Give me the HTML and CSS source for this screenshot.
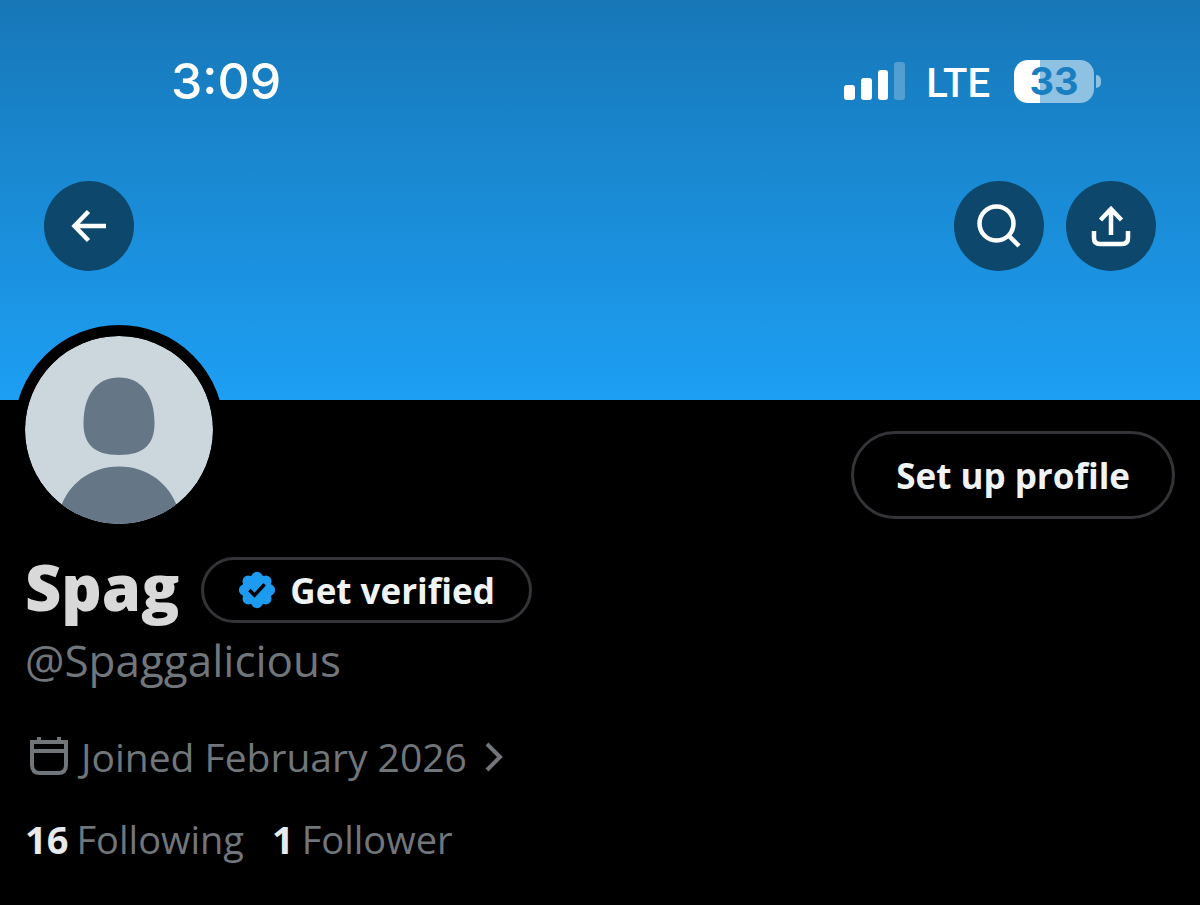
FILE: index.html
```html
<!DOCTYPE html>
<html lang="en">
<head>
  <meta charset="UTF-8">
  <meta name="viewport" content="width=device-width, initial-scale=1.0">
  <title>Spag (@Spaggalicious)</title>
  <link rel="stylesheet" href="styles.css">
</head>
<body>

<header class="banner">
  <div class="status-bar">
    <span class="time">3:09</span>
    <div class="status-icons">
      <svg class="signal" viewBox="0 0 62 40" aria-hidden="true">
        <rect x="0" y="24" width="11" height="15" rx="3"/>
        <rect x="17" y="17" width="11" height="22" rx="3"/>
        <rect x="34" y="9" width="10" height="30" rx="3"/>
        <rect x="50" y="1" width="11" height="38" rx="3" opacity=".25"/>
      </svg>
      <span class="network">LTE</span>
      <div class="battery"><span class="battery-level">33</span></div>
    </div>
  </div>

  <nav class="toolbar">
    <button class="round-btn" type="button" aria-label="Back">
      <svg viewBox="0 0 90 90"><path d="M62 45H31M44.500 30.500L30.500 45l14 14.500"/></svg>
    </button>
    <div class="toolbar-right">
      <button class="round-btn" type="button" aria-label="Search">
        <svg viewBox="0 0 90 90"><circle cx="42.500" cy="42.500" r="17"/><path d="M54.500 54.500l10.500 10.500"/></svg>
      </button>
      <button class="round-btn" type="button" aria-label="Share">
        <svg viewBox="0 0 90 90"><path d="M45 54V28M34.500 39L45 28l10.500 11M28 50v7q0 6 6 6h22q6 0 6-6v-7"/></svg>
      </button>
    </div>
  </nav>
</header>

<main class="profile">
  <div class="profile-top">
    <svg class="avatar" viewBox="0 0 188 188" role="img" aria-label="Default profile picture">
      <defs><clipPath id="face"><circle cx="94" cy="94" r="94"/></clipPath></defs>
      <g clip-path="url(#face)">
        <rect width="188" height="188" fill="#ccd6dd"/>
        <path fill="#657786" d="M94 41.500c22 0 35.500 17 35.500 46 0 20-10 31.500-35.500 31.500S58.500 107.500 58.500 87.500c0-29 13.500-46 35.500-46z"/>
        <path fill="#657786" d="M32 188c3-33 28-57.500 62-57.500s59 24.500 62 57.500z"/>
      </g>
    </svg>
    <button class="outline-btn setup" type="button">Set up profile</button>
  </div>

  <div class="name-row">
    <h1 class="name">Spag</h1>
    <button class="outline-btn verify" type="button">
      <svg class="badge" viewBox="0 0 22 22" aria-hidden="true">
        <g fill="#1d9bf0">
          <circle cx="11" cy="11" r="8"/>
          <circle cx="11" cy="4.500" r="3"/>
          <circle cx="15.600" cy="6.400" r="3"/>
          <circle cx="17.500" cy="11" r="3"/>
          <circle cx="15.600" cy="15.600" r="3"/>
          <circle cx="11" cy="17.500" r="3"/>
          <circle cx="6.400" cy="15.600" r="3"/>
          <circle cx="4.500" cy="11" r="3"/>
          <circle cx="6.400" cy="6.400" r="3"/>
        </g>
        <path fill="none" stroke="#000" stroke-width="1.800" d="M7 11l2.700 2.700 5.300-5.700"/>
      </svg>
      Get verified
    </button>
  </div>
  <p class="handle">@Spaggalicious</p>

  <a class="joined" href="#joined">
    <svg class="calendar" viewBox="0 0 40 40" aria-hidden="true"><path d="M3 5h34v23q0 8-8 8H11q-8 0-8-8zM3 14h34M10 5V0M30 5V0"/></svg>
    Joined February 2026
    <svg class="chevron" viewBox="0 0 18 30" aria-hidden="true"><path d="M2 2l13 13L2 28"/></svg>
  </a>

  <div class="counts">
    <a href="#following"><b>16</b> <span>Following</span></a>
    <a href="#followers"><b>1</b> <span>Follower</span></a>
  </div>
</main>

</body>
</html>
```
FILE: styles.css
```css
body {
  margin: 0;
  background: #000;
  color: #71767b;
  font-family: "Open Sans", "Noto Sans", sans-serif;
}
button {
  font-family: inherit;
  cursor: pointer;
}
a {
  color: inherit;
  text-decoration: none;
}
.banner {
  box-sizing: border-box;
  height: 400px;
  padding-top: 56px;
  background: linear-gradient(#1777b7, #1d9ff4);
}
.status-bar {
  display: flex;
  align-items: center;
  justify-content: space-between;
  height: 50px;
  padding: 0 100px 0 171px;
  color: #fff;
  font-family: Inter, sans-serif;
}
.time {
  font-size: 50px;
  font-weight: 500;
}
.status-icons {
  display: flex;
  align-items: center;
}
.signal {
  width: 62px;
  height: 40px;
  margin-right: 20px;
  fill: #fff;
}
.network {
  margin-right: 24px;
  padding-top: 4px;
  font-family: Roboto, sans-serif;
  font-size: 40px;
  font-weight: 500;
}
.battery {
  position: relative;
  width: 80px;
  height: 43px;
  margin-right: 6px;
  border-radius: 14px;
  background: linear-gradient(90deg, #fff 33%, #8fc1e3 33%);
  color: #1a7fc1;
  text-align: center;
}
.battery::after {
  content: "";
  position: absolute;
  top: 15px;
  right: -7px;
  width: 5px;
  height: 13px;
  border-radius: 0 6px 6px 0;
  background: #8fc1e3;
}
.battery-level {
  font-size: 38px;
  font-weight: 700;
  line-height: 43px;
}
.toolbar {
  display: flex;
  justify-content: space-between;
  padding: 75px 44px 0;
}
.toolbar-right {
  display: flex;
  gap: 22px;
}
.round-btn {
  width: 90px;
  height: 90px;
  padding: 0;
  border: 0;
  border-radius: 50%;
  background: #0d476b;
}
.round-btn svg {
  display: block;
  fill: none;
  stroke: #fff;
  stroke-width: 4.5;
}
.profile {
  padding: 0 25px 32px;
}
.profile-top {
  display: flex;
  align-items: flex-start;
  justify-content: space-between;
}
.avatar {
  width: 188px;
  height: 188px;
  margin: -75px 0 0 -11px;
  border: 11px solid #000;
  border-radius: 50%;
  background: #000;
}
.outline-btn {
  display: flex;
  align-items: center;
  justify-content: center;
  box-sizing: border-box;
  border: 3px solid #333438;
  border-radius: 44px;
  background: #000;
  color: #eff3f4;
  font-size: 35px;
  font-weight: 700;
}
.setup {
  height: 88px;
  margin-top: 31px;
  padding: 0 42px;
}
.name-row {
  display: flex;
  align-items: center;
  gap: 22px;
  margin-top: 21px;
}
.name {
  margin: 0;
  padding-bottom: 6px;
  color: #d9d9d9;
  font-size: 63px;
  font-weight: 800;
  line-height: 62px;
}
.verify {
  gap: 12px;
  height: 66px;
  padding: 0 34px 0 32px;
}
.badge {
  width: 42px;
  height: 42px;
}
.handle {
  margin: 6px 0 0;
  font-size: 44px;
  line-height: 60px;
}
.joined {
  display: flex;
  align-items: center;
  margin-top: 40px;
  font-size: 39px;
  line-height: 54px;
}
.joined svg {
  fill: none;
  stroke: #71767b;
  stroke-width: 4;
}
.calendar {
  width: 40px;
  height: 40px;
  margin: 0 12px 0 4px;
}
.chevron {
  width: 18px;
  height: 30px;
  margin-left: 18px;
}
.counts {
  display: flex;
  gap: 28px;
  margin-top: 28px;
  font-size: 38px;
  line-height: 54px;
}
.counts a {
  display: flex;
  gap: 8px;
}
.counts b {
  color: #e7e9ea;
}
```
